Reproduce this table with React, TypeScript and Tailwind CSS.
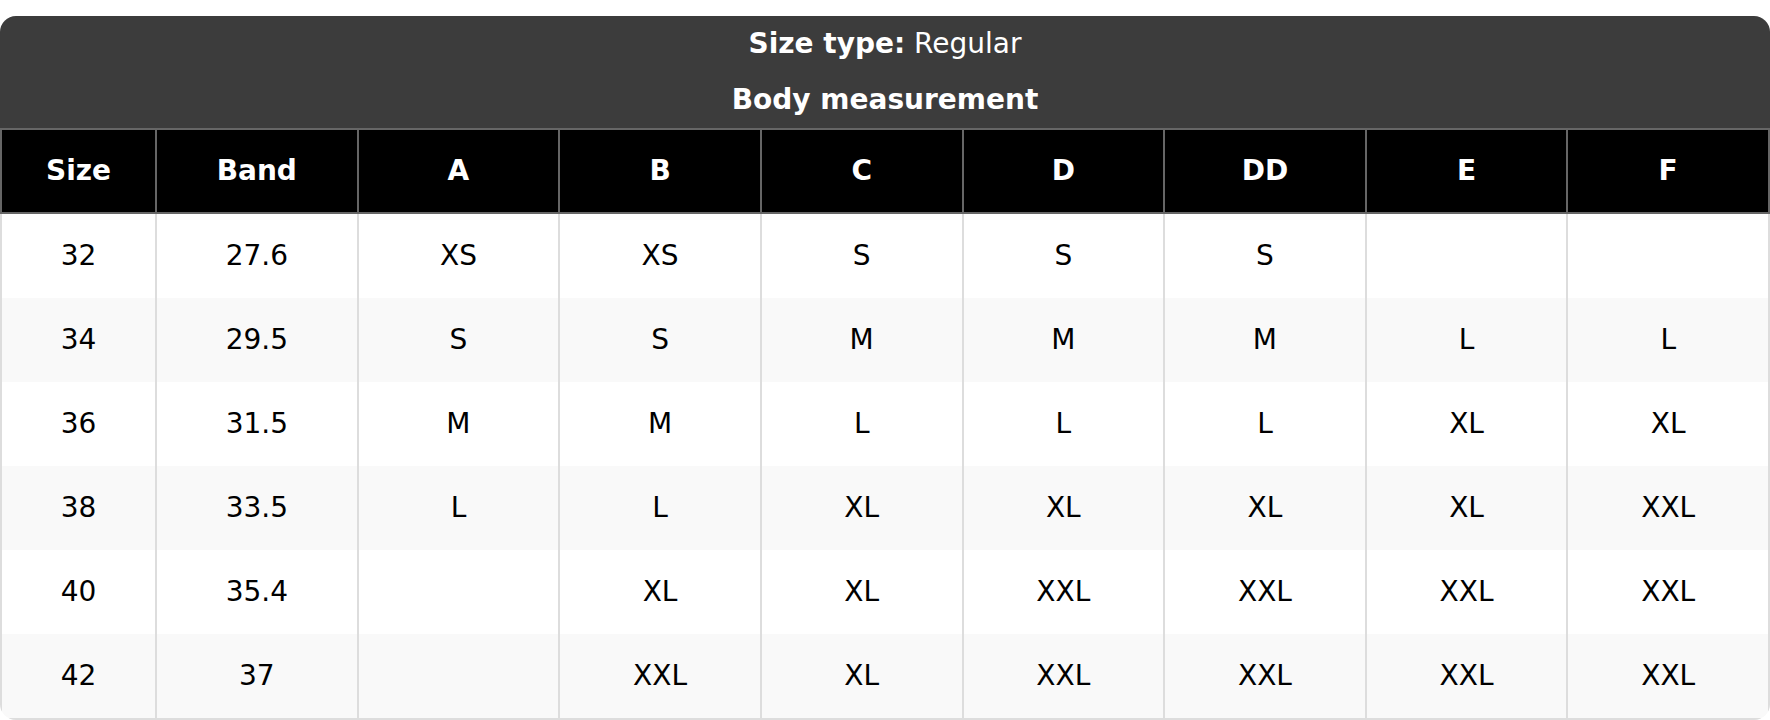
const columns = ["Size", "Band", "A", "B", "C", "D", "DD", "E", "F"];

const rows: string[][] = [
  ["32", "27.6", "XS", "XS", "S", "S", "S", "", ""],
  ["34", "29.5", "S", "S", "M", "M", "M", "L", "L"],
  ["36", "31.5", "M", "M", "L", "L", "L", "XL", "XL"],
  ["38", "33.5", "L", "L", "XL", "XL", "XL", "XL", "XXL"],
  ["40", "35.4", "", "XL", "XL", "XXL", "XXL", "XXL", "XXL"],
  ["42", "37", "", "XXL", "XL", "XXL", "XXL", "XXL", "XXL"],
];

export default function App() {
  return (
    <div
      className="w-full bg-white pt-4"
      style={{ fontFamily: '"DejaVu Sans", Verdana, sans-serif' }}
    >
      <div className="overflow-hidden rounded-2xl">
        {/* Title block */}
        <div className="bg-[#3c3c3c] text-center text-[28px] text-white">
          <div className="py-[13px] leading-[30px]">
            <span className="font-bold">Size type:</span> Regular
          </div>
          <div className="py-[13px] font-bold leading-[30px]">
            Body measurement
          </div>
        </div>

        <table className="w-full table-fixed border-collapse text-center text-[28px]">
          <colgroup>
            <col className="w-[155px]" />
            {columns.slice(1).map((c) => (
              <col key={c} />
            ))}
          </colgroup>
          <thead>
            <tr>
              {columns.map((c) => (
                <th
                  key={c}
                  className="border-2 border-[#666] bg-black py-[26px] font-bold leading-[30px] text-white"
                >
                  {c}
                </th>
              ))}
            </tr>
          </thead>
          <tbody>
            {rows.map((row, i) => (
              <tr
                key={row[0]}
                className={
                  (i % 2 === 1 ? "bg-[#f9f9f9]" : "bg-white") +
                  (i === rows.length - 1 ? " border-b-2 border-[#ddd]" : "")
                }
              >
                {row.map((cell, j) => (
                  <td
                    key={j}
                    className="border-x-2 border-[#ddd] py-[27px] leading-[30px] text-black"
                  >
                    {cell}
                  </td>
                ))}
              </tr>
            ))}
          </tbody>
        </table>
      </div>
    </div>
  );
}
